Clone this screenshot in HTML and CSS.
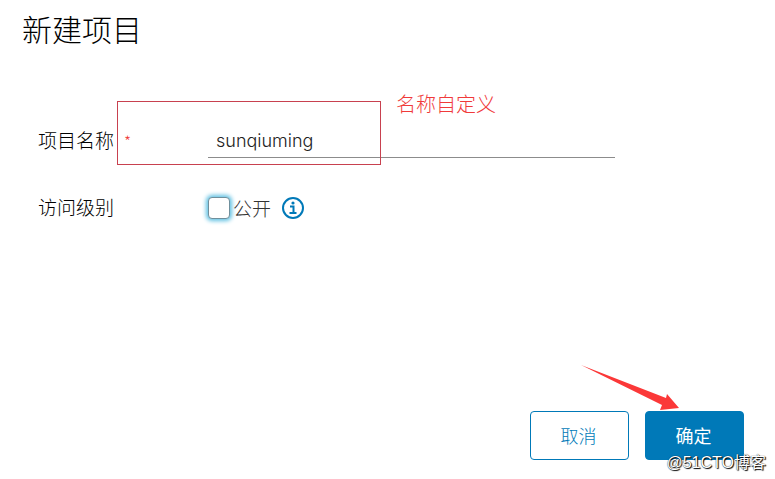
FILE: index.html
```html
<!DOCTYPE html>
<html lang="zh-CN">
<head>
  <meta charset="UTF-8">
  <meta name="viewport" content="width=device-width, initial-scale=1">
  <title>新建项目</title>
  <link rel="stylesheet" href="styles.css">
</head>
<body>

  <form class="dialog">
    <h1>新建项目</h1>

    <div class="fields">
      <div class="row">
        <label for="nombre">项目名称<span class="required">*</span></label>
        <input type="text" id="nombre" class="name-input" value="sunqiuming" spellcheck="false">
        <div class="mark"><span class="mark-note">名称自定义</span></div>
      </div>

      <div class="row">
        <span class="row-title">访问级别</span>
        <div class="access">
          <input type="checkbox" id="publico" class="check">
          <label for="publico" class="check-label">公开</label>
          <svg class="info" viewBox="0 0 24 24" width="24" height="24" aria-hidden="true">
            <circle cx="12" cy="12" r="10" fill="none" stroke="#0079b8" stroke-width="2"/>
            <circle cx="12" cy="7" r="1.6" fill="#0079b8"/>
            <path d="M9 10.5h3.5V17M8.5 17h7" fill="none" stroke="#0079b8" stroke-width="2"/>
          </svg>
        </div>
      </div>
    </div>

    <div class="actions">
      <button type="button" class="btn">取消</button>
      <button type="submit" class="btn btn-primary">确定</button>
      <svg class="arrow" viewBox="0 0 100 46" width="100" height="46" aria-hidden="true">
        <path d="M1 0L86 33L87 29L99 43L80 45L82 40Z" fill="#fb3838"/>
      </svg>
      <span class="watermark">@51CTO博客</span>
    </div>
  </form>

</body>
</html>
```

FILE: styles.css
```css
* {
  box-sizing: border-box;
}
body {
  margin: 0;
  background: #fff;
  color: #000;
  font-family: "Noto Sans CJK SC", sans-serif;
  font-size: 19px;
  line-height: 24px;
}
.dialog {
  padding: 10px 31px 19px 22px;
}
h1 {
  margin: 0;
  font-size: 30px;
  font-weight: 300;
  line-height: 36px;
}
.fields {
  margin: 77px 129px 0 16px;
}
.row {
  position: relative;
  display: grid;
  grid-template-columns: 170px 1fr;
  align-items: center;
  margin-bottom: 36px;
  font-weight: 300;
}
.required {
  margin-left: 10px;
  color: #f03a3a;
  font-size: 16px;
}
.name-input {
  width: 100%;
  height: 35px;
  padding: 0 8px;
  border: 0;
  border-bottom: 1px solid #8c8c8c;
  outline: 0;
  background: none;
  color: #222;
  font-family: Inter, sans-serif;
  font-size: 18px;
  font-weight: 300;
}
.mark {
  position: absolute;
  top: -22px;
  left: 79px;
  width: 264px;
  height: 64px;
  border: 1px solid #c8414f;
  pointer-events: none;
}
.mark-note {
  position: absolute;
  top: -10px;
  left: 278px;
  color: #f03a3a;
  font-size: 20px;
  font-weight: 300;
  white-space: nowrap;
}
.access {
  display: flex;
  align-items: center;
  padding-top: 2px;
  color: #333;
}
.check {
  appearance: none;
  width: 22px;
  height: 22px;
  margin: 0 3px 0 0;
  border: 1px solid #6f8f9c;
  border-radius: 4px;
  background: #fff;
  box-shadow: 0 0 4px 2px #5fc0e2;
}
.check:checked {
  background: #0079b8;
}
.info {
  margin-left: 10px;
}
.actions {
  position: relative;
  display: flex;
  justify-content: flex-end;
  gap: 16px;
  margin-top: 191px;
}
.btn {
  width: 99px;
  height: 49px;
  padding: 0 8px 2px 6px;
  border: 1px solid #0079b8;
  border-radius: 4px;
  background: #fff;
  color: #0079b8;
  font-family: inherit;
  font-size: 18px;
  font-weight: 300;
  cursor: pointer;
}
.btn-primary {
  background: #0079b8;
  color: #fff;
  font-weight: 400;
}
.arrow {
  position: absolute;
  top: -46px;
  right: 64px;
}
.watermark {
  position: absolute;
  right: -22px;
  bottom: -15px;
  color: #fff;
  font-family: "Liberation Sans", "Noto Sans CJK SC", sans-serif;
  font-size: 16px;
  text-shadow: 1px 1px 1px #000, 0 0 1px #000;
  white-space: nowrap;
}
```
